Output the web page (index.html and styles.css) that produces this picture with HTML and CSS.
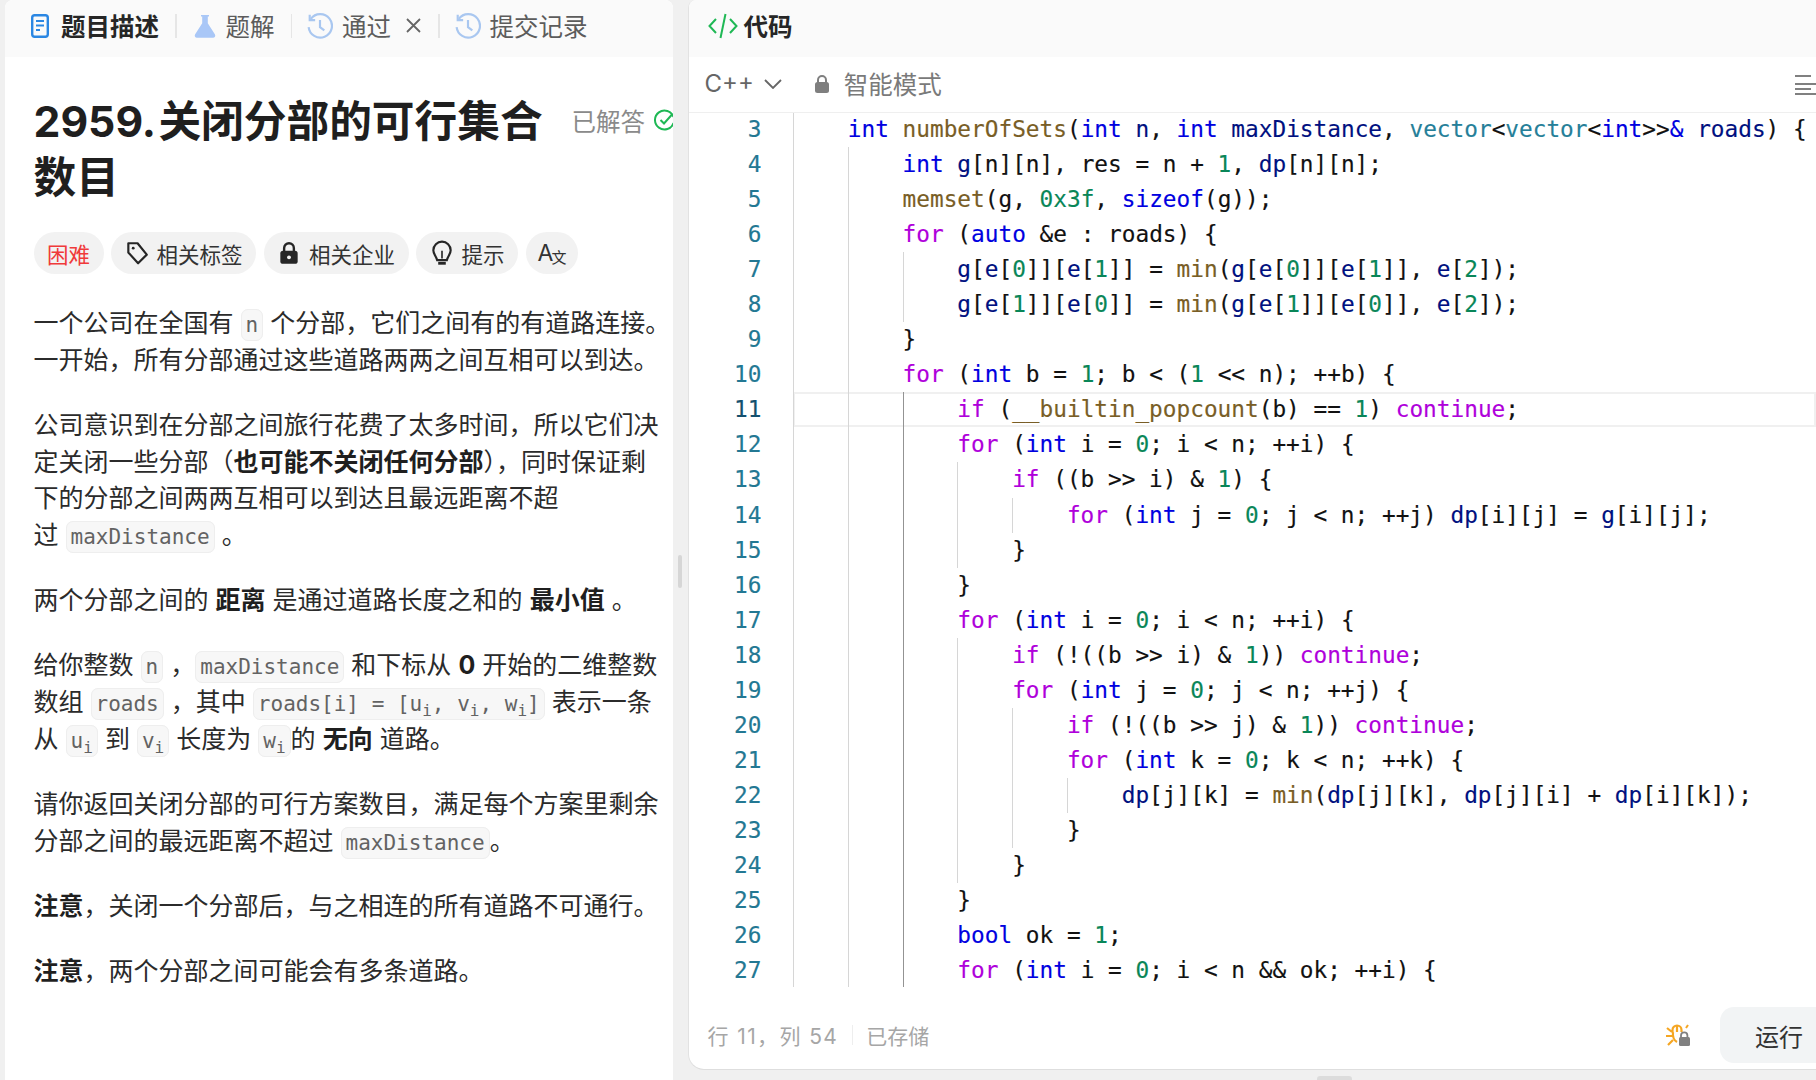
FILE: index.html
```html
<!DOCTYPE html>
<html lang="zh-CN">
<head>
<meta charset="utf-8">
<title>2959. 关闭分部的可行集合数目</title>
<link rel="stylesheet" href="styles.css">
</head>
<body>
<main class="app">
  <section class="left">
    <nav class="tabs">
      <svg class="i-doc" viewBox="0 0 18 24"><rect x="1.200" y="1.200" width="15.600" height="21.600" rx="2.500" fill="none" stroke="#2b87e3" stroke-width="2.400"/><path d="M5 7h8M5 11.500h8M5 16h4" stroke="#2b87e3" stroke-width="2.200" fill="none"/></svg>
      <span class="tab active">题目描述</span>
      <i class="sep"></i>
      <svg class="i-flask" viewBox="0 0 22 24"><path d="M7 1h8v1.600h-1.200v6.600L21 20.500c.8 1.500-.2 3.200-2 3.200H3c-1.800 0-2.800-1.700-2-3.200L8.200 9.200V2.600H7z" fill="#a9c7f7"/></svg>
      <span class="tab">题解</span>
      <i class="sep hs"></i>
      <svg class="i-hist" viewBox="0 0 24 24"><path d="M3.500 5.500A10.800 10.800 0 1 1 1.500 13" fill="none" stroke="#a9c7f0" stroke-width="2"/><path d="M2.500 1.500v5h5" fill="none" stroke="#a9c7f0" stroke-width="2"/><path d="M12 6.500v6.500l4 3" fill="none" stroke="#a9c7f0" stroke-width="2"/></svg>
      <span class="tab">通过</span>
      <svg class="i-x" viewBox="0 0 17 17"><path d="M2 2l13 13M15 2L2 15" stroke="#666" stroke-width="1.800" fill="none"/></svg>
      <i class="sep hs"></i>
      <svg class="i-hist" viewBox="0 0 24 24"><path d="M3.500 5.500A10.800 10.800 0 1 1 1.500 13" fill="none" stroke="#a9c7f0" stroke-width="2"/><path d="M2.500 1.500v5h5" fill="none" stroke="#a9c7f0" stroke-width="2"/><path d="M12 6.500v6.500l4 3" fill="none" stroke="#a9c7f0" stroke-width="2"/></svg>
      <span class="tab">提交记录</span>
    </nav>
    <div class="desc">
      <header class="head">
        <h1 class="title">2959. 关闭分部的可行集合数目</h1>
        <div class="solved">已解答
          <svg class="i-check" viewBox="0 0 22 22"><path d="M19.500 8A9.500 9.500 0 1 0 19.500 14" fill="none" stroke="#1fb855" stroke-width="2"/><path d="M6.500 11l3.500 3.500 8-9" fill="none" stroke="#1fb855" stroke-width="2"/></svg>
        </div>
      </header>
      <div class="chips">
        <span class="chip hard">困难</span>
        <span class="chip"><svg class="ci" viewBox="0 0 22 24"><path d="M3 3h8.500L20 13.500 12 21.500 3 11.500z" fill="none" stroke="#262626" stroke-width="2" stroke-linejoin="round"/><circle cx="7.500" cy="7.500" r="1.300" fill="#262626"/></svg>相关标签</span>
        <span class="chip"><svg class="ci" viewBox="0 0 22 24"><path d="M6.500 11V7.500a4.500 4.500 0 0 1 9 0V11" fill="none" stroke="#262626" stroke-width="2.200"/><rect x="3" y="10" width="16" height="12" rx="2.500" fill="#262626"/><circle cx="11" cy="16" r="1.800" fill="#f2f2f2"/></svg>相关企业</span>
        <span class="chip"><svg class="ci" viewBox="0 0 22 24"><path d="M11 1.500a8 8 0 0 0-8 8c0 3.500 2.500 5 3.500 9h9c1-4 3.500-5.500 3.500-9a8 8 0 0 0-8-8z" fill="none" stroke="#262626" stroke-width="2"/><path d="M11 10v7" stroke="#262626" stroke-width="1.500"/><path d="M7.500 21.500h7" stroke="#262626" stroke-width="2.600"/></svg>提示</span>
        <span class="chip translate">A<small>文</small></span>
      </div>
      <article class="body">
        <p>一个公司在全国有 <code>n</code> 个分部，它们之间有的有道路连接。<br>一开始，所有分部通过这些道路两两之间互相可以到达。</p>
        <p>公司意识到在分部之间旅行花费了太多时间，所以它们决<br>定关闭一些分部（<b>也可能不关闭任何分部</b>），同时保证剩<br>下的分部之间两两互相可以到达且最远距离不超<br>过 <code>maxDistance</code> 。</p>
        <p>两个分部之间的 <b>距离</b> 是通过道路长度之和的 <b>最小值</b> 。</p>
        <p>给你整数 <code>n</code> ，<code>maxDistance</code> 和下标从 <b>0</b> 开始的二维整数<br>数组 <code>roads</code> ，其中 <code>roads[i] = [u<sub>i</sub>, v<sub>i</sub>, w<sub>i</sub>]</code> 表示一条<br>从 <code>u<sub>i</sub></code> 到 <code>v<sub>i</sub></code> 长度为 <code>w<sub>i</sub></code>的 <b>无向</b> 道路。</p>
        <p>请你返回关闭分部的可行方案数目，满足每个方案里剩余<br>分部之间的最远距离不超过 <code>maxDistance</code>。</p>
        <p><b>注意</b>，关闭一个分部后，与之相连的所有道路不可通行。</p>
        <p><b>注意</b>，两个分部之间可能会有多条道路。</p>
      </article>
    </div>
  </section>
  <div class="split"><i class="grip"></i></div>
  <section class="right">
    <div class="r-head">
      <svg class="i-code" viewBox="0 0 30 26"><path d="M8 6L1.500 13 8 20M22 6l6.500 7L22 20" fill="none" stroke="#1fb855" stroke-width="2"/><path d="M17.500 1L12.500 25" fill="none" stroke="#1fb855" stroke-width="2"/></svg>
      <span class="r-title">代码</span>
    </div>
    <div class="toolbar">
      <span class="lang">C++</span>
      <svg class="i-chev" viewBox="0 0 18 10"><path d="M1 1l8 8 8-8" fill="none" stroke="#666" stroke-width="1.800"/></svg>
      <svg class="i-lock" viewBox="0 0 14 18"><path d="M3 8V5a4 4 0 0 1 8 0v3" fill="none" stroke="#7f7f7f" stroke-width="2"/><rect x="0" y="7" width="14" height="11" rx="2.500" fill="#7f7f7f"/></svg>
      <span class="mode">智能模式</span>
      <svg class="i-menu" viewBox="0 0 24 20"><path d="M0 1h16M0 9h24M0 14h16M0 19h24" stroke="#808080" stroke-width="2" fill="none"/></svg>
    </div>
    <div class="editor">
      <div class="lines">
        <div class="row"><span class="ln">3</span><span class="code"><i class="g"></i><span class="t">int</span> <span class="f">numberOfSets</span>(<span class="t">int</span> <span class="v">n</span>, <span class="t">int</span> <span class="v">maxDistance</span>, <span class="c">vector</span>&lt;<span class="c">vector</span>&lt;<span class="t">int</span>&gt;&gt;<span class="t">&amp;</span> <span class="v">roads</span>) {</span></div>
        <div class="row"><span class="ln">4</span><span class="code"><i class="g"></i><i class="g"></i><span class="t">int</span> <span class="v">g</span>[n][n], res = n + <span class="n">1</span>, <span class="v">dp</span>[n][n];</span></div>
        <div class="row"><span class="ln">5</span><span class="code"><i class="g"></i><i class="g"></i><span class="f">memset</span>(g, <span class="n">0x3f</span>, <span class="t">sizeof</span>(g));</span></div>
        <div class="row"><span class="ln">6</span><span class="code"><i class="g"></i><i class="g"></i><span class="k">for</span> (<span class="t">auto</span> &amp;e : roads) {</span></div>
        <div class="row"><span class="ln">7</span><span class="code"><i class="g"></i><i class="g"></i><i class="g"></i><span class="v">g</span>[<span class="v">e</span>[<span class="n">0</span>]][<span class="v">e</span>[<span class="n">1</span>]] = <span class="f">min</span>(<span class="v">g</span>[<span class="v">e</span>[<span class="n">0</span>]][<span class="v">e</span>[<span class="n">1</span>]], <span class="v">e</span>[<span class="n">2</span>]);</span></div>
        <div class="row"><span class="ln">8</span><span class="code"><i class="g"></i><i class="g"></i><i class="g"></i><span class="v">g</span>[<span class="v">e</span>[<span class="n">1</span>]][<span class="v">e</span>[<span class="n">0</span>]] = <span class="f">min</span>(<span class="v">g</span>[<span class="v">e</span>[<span class="n">1</span>]][<span class="v">e</span>[<span class="n">0</span>]], <span class="v">e</span>[<span class="n">2</span>]);</span></div>
        <div class="row"><span class="ln">9</span><span class="code"><i class="g"></i><i class="g"></i>}</span></div>
        <div class="row"><span class="ln">10</span><span class="code"><i class="g"></i><i class="g"></i><span class="k">for</span> (<span class="t">int</span> b = <span class="n">1</span>; b &lt; (<span class="n">1</span> &lt;&lt; n); ++b) {</span></div>
        <div class="row cur"><span class="ln">11</span><span class="code"><i class="g"></i><i class="g"></i><i class="g d"></i><span class="k">if</span> (<span class="f">__builtin_popcount</span>(b) == <span class="n">1</span>) <span class="k">continue</span>;</span></div>
        <div class="row"><span class="ln">12</span><span class="code"><i class="g"></i><i class="g"></i><i class="g d"></i><span class="k">for</span> (<span class="t">int</span> i = <span class="n">0</span>; i &lt; n; ++i) {</span></div>
        <div class="row"><span class="ln">13</span><span class="code"><i class="g"></i><i class="g"></i><i class="g d"></i><i class="g"></i><span class="k">if</span> ((b &gt;&gt; i) &amp; <span class="n">1</span>) {</span></div>
        <div class="row"><span class="ln">14</span><span class="code"><i class="g"></i><i class="g"></i><i class="g d"></i><i class="g"></i><i class="g"></i><span class="k">for</span> (<span class="t">int</span> j = <span class="n">0</span>; j &lt; n; ++j) <span class="v">dp</span>[i][j] = <span class="v">g</span>[i][j];</span></div>
        <div class="row"><span class="ln">15</span><span class="code"><i class="g"></i><i class="g"></i><i class="g d"></i><i class="g"></i>}</span></div>
        <div class="row"><span class="ln">16</span><span class="code"><i class="g"></i><i class="g"></i><i class="g d"></i>}</span></div>
        <div class="row"><span class="ln">17</span><span class="code"><i class="g"></i><i class="g"></i><i class="g d"></i><span class="k">for</span> (<span class="t">int</span> i = <span class="n">0</span>; i &lt; n; ++i) {</span></div>
        <div class="row"><span class="ln">18</span><span class="code"><i class="g"></i><i class="g"></i><i class="g d"></i><i class="g"></i><span class="k">if</span> (!((b &gt;&gt; i) &amp; <span class="n">1</span>)) <span class="k">continue</span>;</span></div>
        <div class="row"><span class="ln">19</span><span class="code"><i class="g"></i><i class="g"></i><i class="g d"></i><i class="g"></i><span class="k">for</span> (<span class="t">int</span> j = <span class="n">0</span>; j &lt; n; ++j) {</span></div>
        <div class="row"><span class="ln">20</span><span class="code"><i class="g"></i><i class="g"></i><i class="g d"></i><i class="g"></i><i class="g"></i><span class="k">if</span> (!((b &gt;&gt; j) &amp; <span class="n">1</span>)) <span class="k">continue</span>;</span></div>
        <div class="row"><span class="ln">21</span><span class="code"><i class="g"></i><i class="g"></i><i class="g d"></i><i class="g"></i><i class="g"></i><span class="k">for</span> (<span class="t">int</span> k = <span class="n">0</span>; k &lt; n; ++k) {</span></div>
        <div class="row"><span class="ln">22</span><span class="code"><i class="g"></i><i class="g"></i><i class="g d"></i><i class="g"></i><i class="g"></i><i class="g"></i><span class="v">dp</span>[j][k] = <span class="f">min</span>(<span class="v">dp</span>[j][k], <span class="v">dp</span>[j][i] + <span class="v">dp</span>[i][k]);</span></div>
        <div class="row"><span class="ln">23</span><span class="code"><i class="g"></i><i class="g"></i><i class="g d"></i><i class="g"></i><i class="g"></i>}</span></div>
        <div class="row"><span class="ln">24</span><span class="code"><i class="g"></i><i class="g"></i><i class="g d"></i><i class="g"></i>}</span></div>
        <div class="row"><span class="ln">25</span><span class="code"><i class="g"></i><i class="g"></i><i class="g d"></i>}</span></div>
        <div class="row"><span class="ln">26</span><span class="code"><i class="g"></i><i class="g"></i><i class="g d"></i><span class="t">bool</span> ok = <span class="n">1</span>;</span></div>
        <div class="row"><span class="ln">27</span><span class="code"><i class="g"></i><i class="g"></i><i class="g d"></i><span class="k">for</span> (<span class="t">int</span> i = <span class="n">0</span>; i &lt; n &amp;&amp; ok; ++i) {</span></div>
      </div>
    </div>
    <footer class="status">
      <span class="pos lc">行 11，列 54</span>
      <i class="sep s2"></i>
      <span class="pos">已存储</span>
      <svg class="i-bug" viewBox="0 0 24 22"><path d="M6.500 8V6a4.500 4.500 0 0 1 9 0v2M7 8c-.5 4 .5 8 4 10M1 4l5 4M0 12h7M2 21l5-5M11 1v7" fill="none" stroke="#f5a623" stroke-width="2.200"/><path d="M20 4l2-3" stroke="#f5a623" stroke-width="2"/><path d="M15 14v-2.500a3.200 3.200 0 0 1 6.400 0V14" fill="none" stroke="#808080" stroke-width="1.800"/><rect x="13" y="13" width="11" height="9" rx="1.500" fill="#808080"/></svg>
      <button class="run">运行</button>
    </footer>
  </section>
  <i class="hgrip"></i>
</main>
</body>
</html>
```
FILE: styles.css
```css
* { box-sizing: border-box; }
html, body { margin: 0; height: 100%; }
body { background: #f0f0f0; overflow: hidden; font-family: Inter, "Noto Sans CJK SC", sans-serif; color: #262626; }
.app { position: relative; display: flex; width: 1816px; height: 1080px; padding-left: 5px; overflow: hidden; }

.left { width: 668px; flex: none; background: #fff; border-radius: 8px 8px 0 0; overflow: hidden; }
.tabs { height: 57px; padding: 0 0 6px 26px; background: #fafafa; display: flex; align-items: center; font-size: 24.500px; }
.tab { color: #5c5c5c; white-space: nowrap; }
.tab.active { color: #262626; font-weight: 700; }
.sep { display: block; width: 1.500px; height: 24px; background: #e6e6e6; flex: none; margin: 0 17px 0 16px; }
.sep.hs { margin-right: 15px; }
.i-doc { width: 18px; height: 24px; margin-right: 12px; flex: none; }
.i-flask { width: 22px; height: 24px; margin-right: 10px; flex: none; }
.i-hist { width: 26px; height: 26px; margin-right: 9px; flex: none; }
.i-x { width: 17px; height: 17px; margin-left: 14px; flex: none; }

.desc { padding: 37px 0 0 28.500px; }
.head { display: flex; align-items: flex-start; }
.title { width: 534px; flex: none; margin: 0; font-size: 42.700px; line-height: 56px; font-weight: 700; color: #1f1f1f; word-spacing: -6.500px; }
.solved { display: flex; align-items: center; gap: 9px; height: 56px; margin-top: -2px; margin-left: 4px; font-size: 24.500px; color: #8a8a8a; white-space: nowrap; }
.i-check { width: 22px; height: 22px; flex: none; }

.chips { display: flex; gap: 7.500px; margin-top: 26px; }
.chip { display: flex; align-items: center; gap: 8px; height: 42px; padding: 0 13.500px; border-radius: 21px; background: #f2f2f2; font-size: 21.500px; color: #333; white-space: nowrap; }
.chip.hard { color: #f03a3a; }
.chip.translate { font-size: 23px; padding: 0 12px; gap: 0; }
.chip small { font-size: 15px; margin: 6px 0 0 -2px; }
.ci { width: 24px; height: 26px; flex: none; }

.body { margin-top: 31px; font-size: 25px; line-height: 36.700px; white-space: nowrap; color: #2b2b2b; }
.body p { margin: 0 0 28.500px; }
.body b { font-weight: 700; color: #1f1f1f; }
code { font-family: "DejaVu Sans Mono", monospace; font-size: 21px; line-height: 1; color: #636363; background: #f7f7f7; border: 1px solid #eee; border-radius: 7px; padding: 3px 4px; }
sub { font-size: 16px; line-height: 0; }

.split { width: 14.500px; flex: none; display: flex; align-items: flex-start; justify-content: center; padding-top: 555px; }
.grip { display: block; width: 4px; height: 33px; background: #d6d6d6; border-radius: 2px; }
.hgrip { position: absolute; left: 1317px; top: 1076px; width: 35px; height: 4px; background: #dcdcdc; border-radius: 3px 3px 0 0; }

.right { flex: 1; min-width: 0; height: 1070px; display: flex; flex-direction: column; background: #fff; border-left: 1.500px solid #e2e2e2; border-bottom: 1.500px solid #dedede; border-radius: 8px 0 0 16px; overflow: hidden; }
.r-head { height: 57px; padding: 0 0 6px 19.500px; flex: none; background: #fafafa; display: flex; align-items: center; }
.i-code { width: 30px; height: 26px; margin-right: 5.500px; flex: none; }
.r-title { font-size: 24.500px; font-weight: 700; }
.toolbar { position: relative; height: 56px; flex: none; display: flex; align-items: center; padding: 0 0 2px 16px; border-bottom: 1.500px solid #efefef; }
.lang { font-size: 24px; color: #666; }
.i-chev { width: 18px; height: 10px; margin-left: 10px; flex: none; }
.i-lock { width: 14px; height: 18px; margin-left: 33px; flex: none; }
.mode { font-size: 24.500px; color: #7a7a7a; margin-left: 15px; }
.i-menu { position: absolute; left: 1106px; top: 18px; width: 24px; height: 20px; }

.editor { flex: 1; min-height: 0; overflow: hidden; }
.lines { margin-top: -1px; font-family: "DejaVu Sans Mono", monospace; font-size: 22.750px; line-height: 35.050px; color: #111; -webkit-text-stroke: .15px; }
.row { display: flex; height: 35.050px; white-space: pre; }
.ln { width: 73px; flex: none; text-align: right; color: #237893; }
.code { flex: 1; margin-left: 31.500px; }
.row.cur .code { box-shadow: inset 0 0 0 2px #f0f0f0; }
.row.cur .ln { color: #14506e; }
.g { display: inline-block; width: 4ch; height: 35.050px; vertical-align: top; border-left: 1.500px solid #d6d6d6; }
.g.d { border-left-color: #939393; }
.k { color: #af00db; }
.t { color: #0000e0; }
.f { color: #795e26; }
.n { color: #098658; }
.v { color: #001080; }
.c { color: #267f99; }

.status { height: 82px; padding: 14px 0 0 19px; flex: none; display: flex; align-items: center; font-size: 21px; color: #a6a6a6; }
.pos.lc { letter-spacing: 1.400px; }
.sep.s2 { width: 1px; height: 20px; background: #eee; margin: 0 13px 0 14px; }
.i-bug { width: 24px; height: 22px; margin-left: auto; margin-right: 30px; flex: none; }
.run { width: 96px; height: 56px; flex: none; border: 0; border-radius: 14px 0 0 14px; background: #f2f4f5; font: inherit; font-size: 24px; color: #333; text-align: left; padding: 0 0 0 35px; }
```
